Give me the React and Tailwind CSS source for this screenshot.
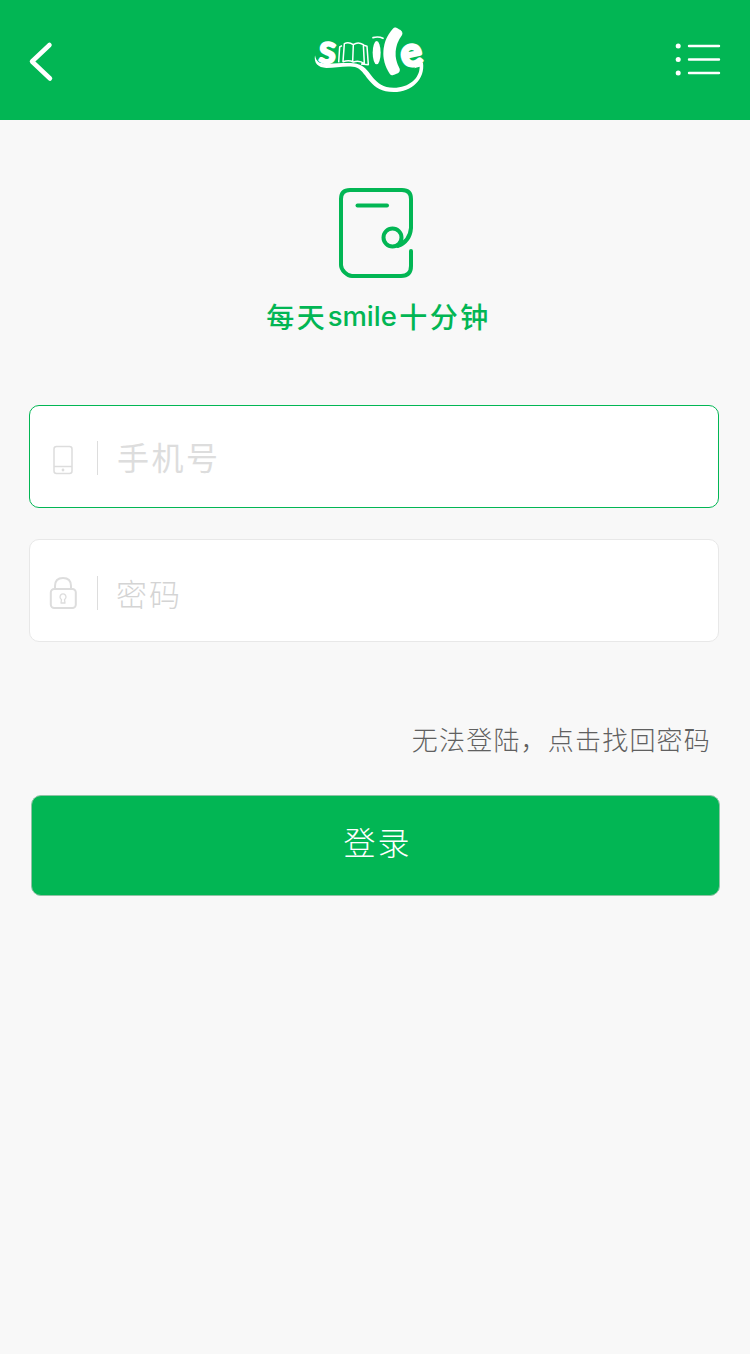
import React from 'react';

function SmileLogo() {
  return (
    <svg width="140" height="90" viewBox="0 0 420 270" fill="none" aria-label="smile">
      <g fill="#fff" stroke="#fff" fontFamily="Lato, sans-serif" fontWeight="900">
        <text transform="translate(53 142) rotate(5)" fontSize="121" fontWeight="700" strokeWidth="5" strokeLinejoin="round">s</text>
        <text transform="translate(251 149) rotate(4) scale(1.2 1)" fontSize="134" fontWeight="700" strokeWidth="16" strokeLinejoin="round">(</text>
        <text transform="translate(310 158) rotate(-12)" fontSize="120" fontWeight="700" strokeWidth="9" strokeLinejoin="round">e</text>
      </g>
      <g stroke="#fff" strokeWidth="4.5" strokeLinejoin="round">
        <path d="M126 92L119 96L116 142M133 86L129 140Q147 134 160 141Q178 134 193 146L190 89Q174 79 160 89Q146 80 133 86ZM160 89L158 140M192 91L201 94L205 149L183 147" />
      </g>
      <ellipse cx="230" cy="113" rx="12" ry="35" fill="#fff" />
      <path d="M219 68Q235 63 249 70" stroke="#fff" strokeWidth="5" strokeLinecap="round" />
      <path d="M45 121C49 142 58 145 78 146C112 147 151 140 179 149C215 162 218 218 281 218C328 218 359 189 359 155L342 160C348 151 358 142 369 143C376 190 337 231 281 231C210 231 202 173 171 158C147 150 111 158 79 159C54 158 41 145 45 121Z" fill="#fff" />
    </svg>
  );
}

function Header() {
  return (
    <header className="flex h-[120px] items-start justify-between bg-[#02b654]">
      <button className="mt-[30px] ml-[15px]" aria-label="返回">
        <svg width="60" height="60" viewBox="0 0 60 60" fill="none" stroke="#fff" strokeWidth="4.5" strokeLinecap="round" strokeLinejoin="round">
          <path d="M34.5 15L17 31.5L35 48.5" />
        </svg>
      </button>
      <div className="mt-[15px] ml-[5px]"><SmileLogo /></div>
      <button className="mt-[30px]" aria-label="菜单">
        <svg width="90" height="60" viewBox="0 0 90 60" fill="#fff" stroke="#fff">
          <path d="M29 16H59M29 29.5H59M29 43H59" strokeWidth="2.4" strokeLinecap="round" />
          <g stroke="none">
            <circle cx="18.2" cy="16" r="2.5" />
            <circle cx="18.2" cy="29.5" r="2.5" />
            <circle cx="18.2" cy="43" r="2.5" />
          </g>
        </svg>
      </button>
    </header>
  );
}

function BookIcon() {
  return (
    <svg width="76" height="92" viewBox="0 0 76 92" fill="none" stroke="#02b654" strokeWidth="4" strokeLinecap="round">
      <path d="M73 64V79Q73 89 63 89H14C9 89 3 83 3 78V12Q3 3 12 3H64Q73 3 73 12V41Q72 54 60 59" />
      <circle cx="54.500" cy="50.500" r="9" />
      <path d="M19.500 18.500H49" />
    </svg>
  );
}

function PhoneIcon() {
  return (
    <svg width="28" height="36" viewBox="0 0 28 36" fill="none" stroke="#ddd" strokeWidth="1.500">
      <rect x="5" y="4.500" width="18" height="27" rx="2.500" />
      <path d="M5 24.500H23" />
      <circle cx="14" cy="28" r="1.400" fill="#ddd" stroke="none" />
    </svg>
  );
}

function LockIcon() {
  return (
    <svg width="28" height="36" viewBox="0 0 28 36" fill="none" stroke="#ddd" strokeWidth="2">
      <rect x="1.800" y="14" width="25" height="19" rx="3.500" />
      <path d="M6 14V11Q6 3 14 3T22 11V14" />
      <path d="M12.500 24.500A3 3 0 1 1 15.500 24.500L16 28H12Z" strokeWidth="1.300" strokeLinejoin="round" />
    </svg>
  );
}

export default function App() {
  return (
    <div className="min-h-[1354px] w-[750px] bg-[#f8f8f8] font-['Noto_Sans_CJK_SC',sans-serif]">
      <Header />
      <main>
        <div className="flex flex-col items-center pt-[67px]">
          <div className="pl-[2px]"><BookIcon /></div>
          <h1 className="mt-[17px] ml-[7px] flex h-[40px] items-center text-[28px] leading-[40px] font-medium whitespace-nowrap text-[#02b654]">
            <span className="tracking-[2.500px]">每天</span>
            <span className="inline-block w-[72px] pr-[2px] text-center font-[Inter,sans-serif] text-[27.500px]">smile</span>
            <span className="tracking-[2.500px]">十分钟</span>
          </h1>
        </div>

        <form className="pt-[69px]">
          <label className="ml-[29px] flex h-[103px] w-[690px] items-center rounded-[10px] border border-[#02b654] bg-white pl-[19px]">
            <span className="pt-[7px]"><PhoneIcon /></span>
            <span className="mt-[3px] ml-[20px] h-[34px] w-px bg-[#ddd]" />
            <span className="mb-[2px] ml-[19px] text-[32px] leading-[48px] tracking-[2.500px] text-[#ddd]">手机号</span>
          </label>
          <label className="mt-[31px] ml-[29px] flex h-[103px] w-[690px] items-center rounded-[10px] border border-[#e8e8e8] bg-white pl-[19px]">
            <span className="pt-[4px]"><LockIcon /></span>
            <span className="mt-[4px] ml-[20px] h-[34px] w-px bg-[#ddd]" />
            <span className="mt-[4px] ml-[18px] text-[31px] leading-[48px] font-light tracking-[2px] text-[#d4d4d4]">密码</span>
          </label>

          <a className="mt-[77px] mr-[39px] block text-right text-[26px] leading-[40px] font-light tracking-[1.200px] text-[#606060]">
            无法登陆，点击找回密码
          </a>
          <button type="button" className="mt-[36px] ml-[31px] flex h-[101px] w-[689px] items-center justify-center rounded-[10px] border border-[#8fc3a5] bg-[#02b654] pb-[9px] pl-[4px] text-[32px] font-light tracking-[2px] text-white">
            登录
          </button>
        </form>
      </main>
    </div>
  );
}
